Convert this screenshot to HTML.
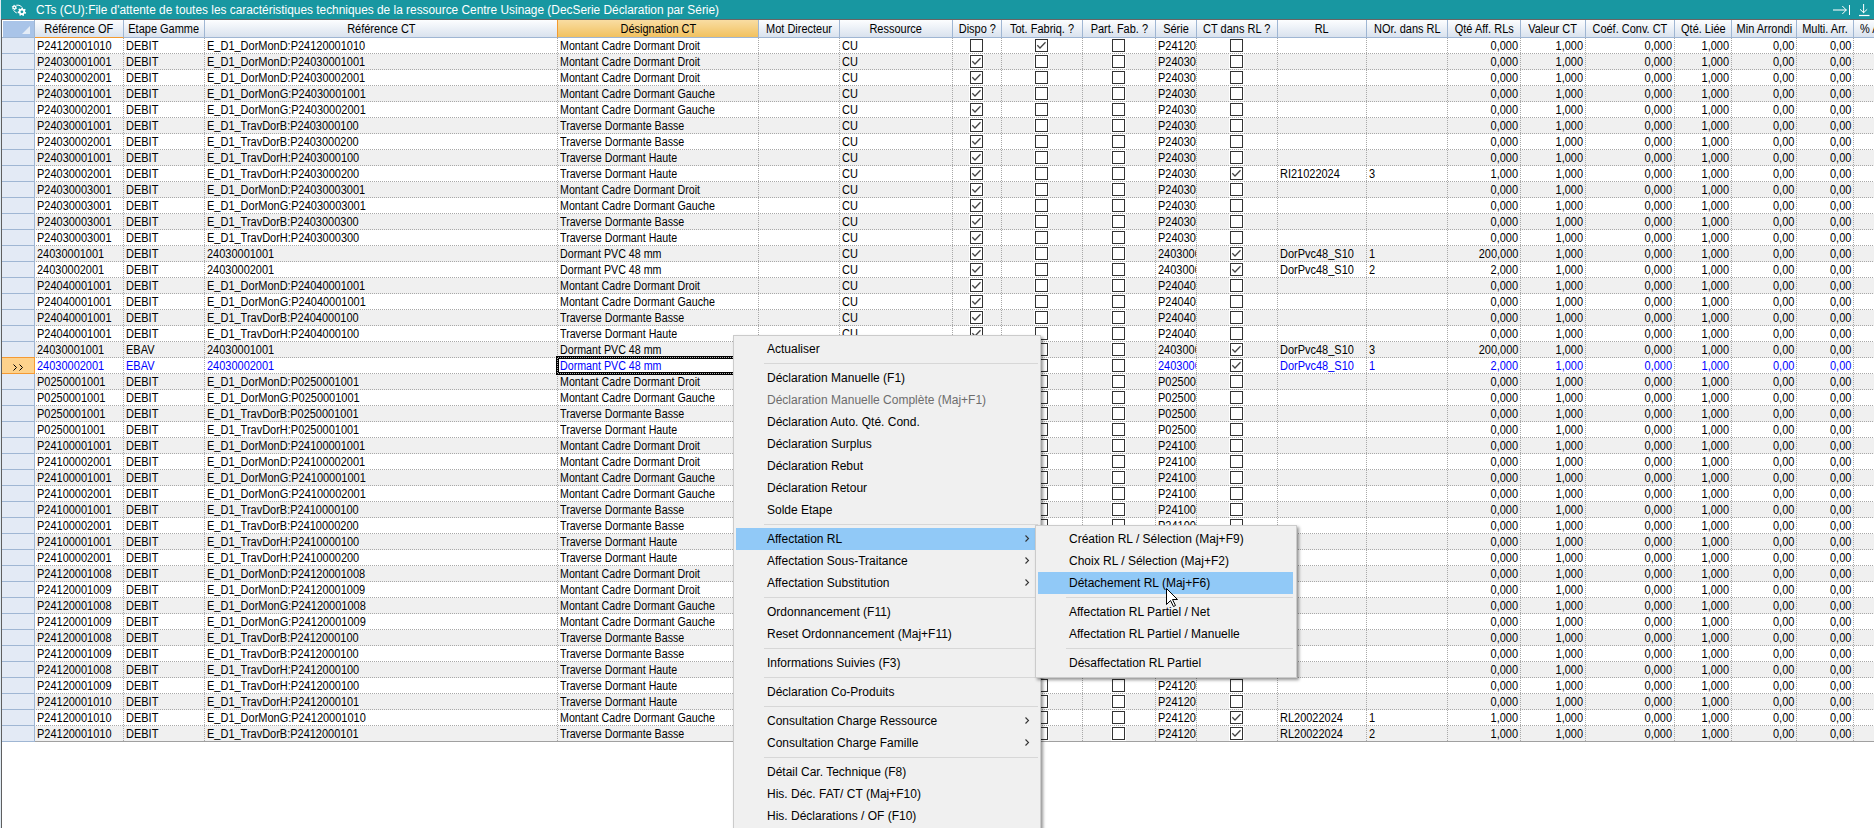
<!DOCTYPE html>
<html><head><meta charset="utf-8"><title>CTs</title>
<style>
*{box-sizing:border-box;margin:0;padding:0}
html,body{width:1874px;height:828px;overflow:hidden;background:#fff}
body{position:relative;font-family:"Liberation Sans",sans-serif;font-size:11px;color:#000}
.a{position:absolute}
#tb{left:1px;top:0;width:1873px;height:19px;background:#1897a1}
#tbl{left:1px;top:19px;width:1873px;height:1px;background:#6b6464}
#ttl{left:36px;top:1px;height:18px;line-height:18px;font-size:12px;color:#fff;white-space:nowrap;transform:scaleX(.99);transform-origin:0 50%}
#lb0{left:0;top:0;width:1px;height:828px;background:#dfeaf3}
#lb1{left:1px;top:19px;width:1px;height:809px;background:#5f5f5f}
.h{top:20px;height:18px;background:linear-gradient(#fdfeff,#d9e2ee);border-right:1px solid #9fb6d3;border-bottom:1px solid #9fb6d3;display:flex;justify-content:center;line-height:19px;white-space:nowrap;overflow:hidden;font-size:12px}
.h b{font-weight:normal;display:inline-block;transform:scaleX(.915);transform-origin:50% 50%}
.hs{background:linear-gradient(#f9dda3,#f1c15f);border-left:1px solid #f39a2f}
.ho{border-bottom-color:#f39a2f}
.r{left:35px;width:1839px;height:16px;overflow:hidden}
.r.g{background:#f0f0f0}
.dl{position:absolute;left:0;bottom:0;width:100%;height:1px;background:repeating-linear-gradient(to right,transparent 0 1px,#a8a8a8 1px 2px)}
.c{position:absolute;top:1px;height:14px;line-height:15px;white-space:nowrap;overflow:hidden;padding-left:2px;font-size:12px}
.c b{font-weight:normal;display:inline-block;transform:scaleX(.915);transform-origin:0 50%}
.c.n{text-align:right;padding-left:0;padding-right:2px}
.c.n b{transform-origin:100% 50%}
.c u{text-decoration:none;position:relative;top:-1px}
.vl{position:absolute;top:38px;width:1px;height:703px;background:repeating-linear-gradient(to bottom,#a8a8a8 0 1px,transparent 1px 2px)}
.s{left:2px;width:33px;height:16px;background:#e3eaf5;border-right:1px solid #9fb6d3;border-bottom:1px solid #9fb6d3}
.sel{color:#0000ff}
.cb{position:absolute;top:0;width:15px;height:15px;background:#fff;padding:1px}
.cb i{display:block;width:13px;height:13px;border:1px solid #333;position:relative}
.cb svg{position:absolute;left:0;top:0}
.mn{background:#f0f0f0;border:1px solid #cbcbcb;font-size:12px;color:#000}
.mi{position:absolute;height:22px;line-height:22px;white-space:nowrap}
.mh{background:#91c9f7}
.ms{position:absolute;height:1px;background:#d7d7d7}
.dis{color:#6d6d6d}
</style></head><body>

<div class="a" id="lb0"></div><div class="a" id="tb"></div><div class="a" id="tbl"></div><div class="a" id="lb1"></div>
<div class="a" id="ttl">CTs (CU):File d'attente de toutes les caractéristiques techniques de la ressource Centre Usinage (DecSerie Déclaration par Série)</div>
<svg class="a" style="left:8px;top:0" width="24" height="19" viewBox="0 0 24 19">
<path fill="#fff" fill-rule="evenodd" d="M8.30 7.50 L9.07 7.92 L8.74 8.85 L7.88 8.70 L7.35 9.15 L7.37 10.02 L6.40 10.20 L6.10 9.38 L5.45 9.15 L4.70 9.60 L4.06 8.85 L4.63 8.18 L4.50 7.50 L3.73 7.08 L4.06 6.15 L4.92 6.30 L5.45 5.85 L5.43 4.98 L6.40 4.80 L6.70 5.62 L7.35 5.85 L8.10 5.40 L8.74 6.15 L8.17 6.82Z M7.2 7.5 A0.8 0.8 0 1 0 5.6 7.5 A0.8 0.8 0 1 0 7.2 7.5Z"/>
<path fill="#fff" fill-rule="evenodd" d="M17.10 11.80 L18.16 12.38 L17.77 13.67 L16.57 13.56 L15.90 14.30 L16.11 15.49 L14.86 15.99 L14.19 14.99 L13.19 14.92 L12.39 15.83 L11.22 15.16 L11.59 14.01 L11.02 13.19 L9.81 13.13 L9.60 11.80 L10.73 11.37 L11.02 10.41 L10.31 9.43 L11.22 8.44 L12.26 9.05 L13.19 8.68 L13.51 7.52 L14.86 7.61 L15.02 8.80 L15.90 9.30 L17.01 8.83 L17.77 9.93 L16.94 10.81Z M15.3 11.8 A1.4 1.4 0 1 0 12.5 11.8 A1.4 1.4 0 1 0 15.3 11.8Z"/>
<path d="M8.3 5.2 Q11 4.6 13.6 6.6" stroke="#fff" stroke-width="1" fill="none"/>
<path d="M5.6 10.3 Q6.6 12 8.8 13" stroke="#fff" stroke-width="1" fill="none"/>
</svg>
<svg class="a" style="left:1830px;top:0" width="44" height="19" viewBox="0 0 44 19">
<g stroke="#fff" stroke-width="1" fill="none">
<path d="M3 10h13.5" stroke="#c4e3e6" stroke-width="1.4"/><path d="M12.3 6l4 4-4 4"/><path d="M19.5 5v10"/>
<path d="M33.6 4v9"/><path d="M30 9.3l3.6 3.4 3.6-3.4"/><path d="M29 15.5h10.5" stroke-width="1.2"/>
</g></svg>
<div class="a" style="left:2px;top:20px;width:33px;height:18px;background:#a9c4e8;border-right:1px solid #9fb6d3;border-bottom:1px solid #9fb6d3;box-shadow:inset 1px 1px 0 #fff"></div>
<svg class="a" style="left:22px;top:26px" width="8" height="8"><path d="M0 8H8V0Z" fill="#e4ecf6"/></svg>
<div class="a h ho" style="left:35px;width:89px"><b>Référence OF</b></div>
<div class="a h" style="left:124px;width:81px"><b>Etape Gamme</b></div>
<div class="a h" style="left:205px;width:353px"><b>Référence CT</b></div>
<div class="a h hs" style="left:557px;width:202px"><b>Désignation CT</b></div>
<div class="a h" style="left:759px;width:81px"><b>Mot Directeur</b></div>
<div class="a h" style="left:840px;width:113px"><b>Ressource</b></div>
<div class="a h" style="left:953px;width:49px"><b>Dispo ?</b></div>
<div class="a h" style="left:1002px;width:81px"><b>Tot. Fabriq. ?</b></div>
<div class="a h" style="left:1083px;width:73px"><b>Part. Fab. ?</b></div>
<div class="a h" style="left:1156px;width:41px"><b>Série</b></div>
<div class="a h" style="left:1197px;width:81px"><b>CT dans RL ?</b></div>
<div class="a h" style="left:1278px;width:89px"><b>RL</b></div>
<div class="a h" style="left:1367px;width:81px"><b>NOr. dans RL</b></div>
<div class="a h" style="left:1448px;width:73px"><b>Qté Aff. RLs</b></div>
<div class="a h" style="left:1521px;width:65px"><b>Valeur CT</b></div>
<div class="a h" style="left:1586px;width:89px"><b>Coéf. Conv. CT</b></div>
<div class="a h" style="left:1675px;width:57px"><b>Qté. Liée</b></div>
<div class="a h" style="left:1732px;width:65px"><b>Min Arrondi</b></div>
<div class="a h" style="left:1797px;width:57px"><b>Multi. Arr.</b></div>
<div class="a h" style="left:1854px;width:100px"><b style="position:absolute;left:6px;transform-origin:0 50%">% Arrondi</b></div>
<div class="a s" style="top:38px"></div>
<div class="a r" style="top:38px">
<span class="c" style="left:0px;width:88px"><b>P24120001010</b></span>
<span class="c" style="left:89px;width:80px"><b>DEBIT</b></span>
<span class="c" style="left:170px;width:352px"><b>E<u>_</u>D1<u>_</u>DorMonD:P24120001010</b></span>
<span class="c" style="left:523px;width:200px"><b style="transform:scaleX(.89)">Montant Cadre Dormant Droit</b></span>
<span class="c" style="left:805px;width:112px"><b>CU</b></span>
<span class="cb" style="left:934px"><i></i></span>
<span class="cb" style="left:999px"><i><svg width="13" height="13"><path d="M1.3 5.3l2.7 2.7 5.5-5.7" stroke="#444" stroke-width="1.3" fill="none"/></svg></i></span>
<span class="cb" style="left:1076px"><i></i></span>
<span class="c" style="left:1121px;width:40px"><b>P24120001010</b></span>
<span class="cb" style="left:1194px"><i></i></span>
<span class="c n" style="left:1413px;width:72px"><b>0,000</b></span>
<span class="c n" style="left:1486px;width:64px"><b>1,000</b></span>
<span class="c n" style="left:1551px;width:88px"><b>0,000</b></span>
<span class="c n" style="left:1640px;width:56px"><b>1,000</b></span>
<span class="c n" style="left:1697px;width:64px"><b>0,00</b></span>
<span class="c n" style="left:1762px;width:56px"><b>0,00</b></span>
<i class="dl"></i>
</div>
<div class="a s" style="top:54px"></div>
<div class="a r g" style="top:54px">
<span class="c" style="left:0px;width:88px"><b>P24030001001</b></span>
<span class="c" style="left:89px;width:80px"><b>DEBIT</b></span>
<span class="c" style="left:170px;width:352px"><b>E<u>_</u>D1<u>_</u>DorMonD:P24030001001</b></span>
<span class="c" style="left:523px;width:200px"><b style="transform:scaleX(.89)">Montant Cadre Dormant Droit</b></span>
<span class="c" style="left:805px;width:112px"><b>CU</b></span>
<span class="cb" style="left:934px"><i><svg width="13" height="13"><path d="M1.3 5.3l2.7 2.7 5.5-5.7" stroke="#444" stroke-width="1.3" fill="none"/></svg></i></span>
<span class="cb" style="left:999px"><i></i></span>
<span class="cb" style="left:1076px"><i></i></span>
<span class="c" style="left:1121px;width:40px"><b>P24030001001</b></span>
<span class="cb" style="left:1194px"><i></i></span>
<span class="c n" style="left:1413px;width:72px"><b>0,000</b></span>
<span class="c n" style="left:1486px;width:64px"><b>1,000</b></span>
<span class="c n" style="left:1551px;width:88px"><b>0,000</b></span>
<span class="c n" style="left:1640px;width:56px"><b>1,000</b></span>
<span class="c n" style="left:1697px;width:64px"><b>0,00</b></span>
<span class="c n" style="left:1762px;width:56px"><b>0,00</b></span>
<i class="dl"></i>
</div>
<div class="a s" style="top:70px"></div>
<div class="a r" style="top:70px">
<span class="c" style="left:0px;width:88px"><b>P24030002001</b></span>
<span class="c" style="left:89px;width:80px"><b>DEBIT</b></span>
<span class="c" style="left:170px;width:352px"><b>E<u>_</u>D1<u>_</u>DorMonD:P24030002001</b></span>
<span class="c" style="left:523px;width:200px"><b style="transform:scaleX(.89)">Montant Cadre Dormant Droit</b></span>
<span class="c" style="left:805px;width:112px"><b>CU</b></span>
<span class="cb" style="left:934px"><i><svg width="13" height="13"><path d="M1.3 5.3l2.7 2.7 5.5-5.7" stroke="#444" stroke-width="1.3" fill="none"/></svg></i></span>
<span class="cb" style="left:999px"><i></i></span>
<span class="cb" style="left:1076px"><i></i></span>
<span class="c" style="left:1121px;width:40px"><b>P24030002001</b></span>
<span class="cb" style="left:1194px"><i></i></span>
<span class="c n" style="left:1413px;width:72px"><b>0,000</b></span>
<span class="c n" style="left:1486px;width:64px"><b>1,000</b></span>
<span class="c n" style="left:1551px;width:88px"><b>0,000</b></span>
<span class="c n" style="left:1640px;width:56px"><b>1,000</b></span>
<span class="c n" style="left:1697px;width:64px"><b>0,00</b></span>
<span class="c n" style="left:1762px;width:56px"><b>0,00</b></span>
<i class="dl"></i>
</div>
<div class="a s" style="top:86px"></div>
<div class="a r g" style="top:86px">
<span class="c" style="left:0px;width:88px"><b>P24030001001</b></span>
<span class="c" style="left:89px;width:80px"><b>DEBIT</b></span>
<span class="c" style="left:170px;width:352px"><b>E<u>_</u>D1<u>_</u>DorMonG:P24030001001</b></span>
<span class="c" style="left:523px;width:200px"><b style="transform:scaleX(.89)">Montant Cadre Dormant Gauche</b></span>
<span class="c" style="left:805px;width:112px"><b>CU</b></span>
<span class="cb" style="left:934px"><i><svg width="13" height="13"><path d="M1.3 5.3l2.7 2.7 5.5-5.7" stroke="#444" stroke-width="1.3" fill="none"/></svg></i></span>
<span class="cb" style="left:999px"><i></i></span>
<span class="cb" style="left:1076px"><i></i></span>
<span class="c" style="left:1121px;width:40px"><b>P24030001001</b></span>
<span class="cb" style="left:1194px"><i></i></span>
<span class="c n" style="left:1413px;width:72px"><b>0,000</b></span>
<span class="c n" style="left:1486px;width:64px"><b>1,000</b></span>
<span class="c n" style="left:1551px;width:88px"><b>0,000</b></span>
<span class="c n" style="left:1640px;width:56px"><b>1,000</b></span>
<span class="c n" style="left:1697px;width:64px"><b>0,00</b></span>
<span class="c n" style="left:1762px;width:56px"><b>0,00</b></span>
<i class="dl"></i>
</div>
<div class="a s" style="top:102px"></div>
<div class="a r" style="top:102px">
<span class="c" style="left:0px;width:88px"><b>P24030002001</b></span>
<span class="c" style="left:89px;width:80px"><b>DEBIT</b></span>
<span class="c" style="left:170px;width:352px"><b>E<u>_</u>D1<u>_</u>DorMonG:P24030002001</b></span>
<span class="c" style="left:523px;width:200px"><b style="transform:scaleX(.89)">Montant Cadre Dormant Gauche</b></span>
<span class="c" style="left:805px;width:112px"><b>CU</b></span>
<span class="cb" style="left:934px"><i><svg width="13" height="13"><path d="M1.3 5.3l2.7 2.7 5.5-5.7" stroke="#444" stroke-width="1.3" fill="none"/></svg></i></span>
<span class="cb" style="left:999px"><i></i></span>
<span class="cb" style="left:1076px"><i></i></span>
<span class="c" style="left:1121px;width:40px"><b>P24030002001</b></span>
<span class="cb" style="left:1194px"><i></i></span>
<span class="c n" style="left:1413px;width:72px"><b>0,000</b></span>
<span class="c n" style="left:1486px;width:64px"><b>1,000</b></span>
<span class="c n" style="left:1551px;width:88px"><b>0,000</b></span>
<span class="c n" style="left:1640px;width:56px"><b>1,000</b></span>
<span class="c n" style="left:1697px;width:64px"><b>0,00</b></span>
<span class="c n" style="left:1762px;width:56px"><b>0,00</b></span>
<i class="dl"></i>
</div>
<div class="a s" style="top:118px"></div>
<div class="a r g" style="top:118px">
<span class="c" style="left:0px;width:88px"><b>P24030001001</b></span>
<span class="c" style="left:89px;width:80px"><b>DEBIT</b></span>
<span class="c" style="left:170px;width:352px"><b>E<u>_</u>D1<u>_</u>TravDorB:P2403000100</b></span>
<span class="c" style="left:523px;width:200px"><b style="transform:scaleX(.89)">Traverse Dormante Basse</b></span>
<span class="c" style="left:805px;width:112px"><b>CU</b></span>
<span class="cb" style="left:934px"><i><svg width="13" height="13"><path d="M1.3 5.3l2.7 2.7 5.5-5.7" stroke="#444" stroke-width="1.3" fill="none"/></svg></i></span>
<span class="cb" style="left:999px"><i></i></span>
<span class="cb" style="left:1076px"><i></i></span>
<span class="c" style="left:1121px;width:40px"><b>P24030001001</b></span>
<span class="cb" style="left:1194px"><i></i></span>
<span class="c n" style="left:1413px;width:72px"><b>0,000</b></span>
<span class="c n" style="left:1486px;width:64px"><b>1,000</b></span>
<span class="c n" style="left:1551px;width:88px"><b>0,000</b></span>
<span class="c n" style="left:1640px;width:56px"><b>1,000</b></span>
<span class="c n" style="left:1697px;width:64px"><b>0,00</b></span>
<span class="c n" style="left:1762px;width:56px"><b>0,00</b></span>
<i class="dl"></i>
</div>
<div class="a s" style="top:134px"></div>
<div class="a r" style="top:134px">
<span class="c" style="left:0px;width:88px"><b>P24030002001</b></span>
<span class="c" style="left:89px;width:80px"><b>DEBIT</b></span>
<span class="c" style="left:170px;width:352px"><b>E<u>_</u>D1<u>_</u>TravDorB:P2403000200</b></span>
<span class="c" style="left:523px;width:200px"><b style="transform:scaleX(.89)">Traverse Dormante Basse</b></span>
<span class="c" style="left:805px;width:112px"><b>CU</b></span>
<span class="cb" style="left:934px"><i><svg width="13" height="13"><path d="M1.3 5.3l2.7 2.7 5.5-5.7" stroke="#444" stroke-width="1.3" fill="none"/></svg></i></span>
<span class="cb" style="left:999px"><i></i></span>
<span class="cb" style="left:1076px"><i></i></span>
<span class="c" style="left:1121px;width:40px"><b>P24030002001</b></span>
<span class="cb" style="left:1194px"><i></i></span>
<span class="c n" style="left:1413px;width:72px"><b>0,000</b></span>
<span class="c n" style="left:1486px;width:64px"><b>1,000</b></span>
<span class="c n" style="left:1551px;width:88px"><b>0,000</b></span>
<span class="c n" style="left:1640px;width:56px"><b>1,000</b></span>
<span class="c n" style="left:1697px;width:64px"><b>0,00</b></span>
<span class="c n" style="left:1762px;width:56px"><b>0,00</b></span>
<i class="dl"></i>
</div>
<div class="a s" style="top:150px"></div>
<div class="a r g" style="top:150px">
<span class="c" style="left:0px;width:88px"><b>P24030001001</b></span>
<span class="c" style="left:89px;width:80px"><b>DEBIT</b></span>
<span class="c" style="left:170px;width:352px"><b>E<u>_</u>D1<u>_</u>TravDorH:P2403000100</b></span>
<span class="c" style="left:523px;width:200px"><b style="transform:scaleX(.89)">Traverse Dormant Haute</b></span>
<span class="c" style="left:805px;width:112px"><b>CU</b></span>
<span class="cb" style="left:934px"><i><svg width="13" height="13"><path d="M1.3 5.3l2.7 2.7 5.5-5.7" stroke="#444" stroke-width="1.3" fill="none"/></svg></i></span>
<span class="cb" style="left:999px"><i></i></span>
<span class="cb" style="left:1076px"><i></i></span>
<span class="c" style="left:1121px;width:40px"><b>P24030001001</b></span>
<span class="cb" style="left:1194px"><i></i></span>
<span class="c n" style="left:1413px;width:72px"><b>0,000</b></span>
<span class="c n" style="left:1486px;width:64px"><b>1,000</b></span>
<span class="c n" style="left:1551px;width:88px"><b>0,000</b></span>
<span class="c n" style="left:1640px;width:56px"><b>1,000</b></span>
<span class="c n" style="left:1697px;width:64px"><b>0,00</b></span>
<span class="c n" style="left:1762px;width:56px"><b>0,00</b></span>
<i class="dl"></i>
</div>
<div class="a s" style="top:166px"></div>
<div class="a r" style="top:166px">
<span class="c" style="left:0px;width:88px"><b>P24030002001</b></span>
<span class="c" style="left:89px;width:80px"><b>DEBIT</b></span>
<span class="c" style="left:170px;width:352px"><b>E<u>_</u>D1<u>_</u>TravDorH:P2403000200</b></span>
<span class="c" style="left:523px;width:200px"><b style="transform:scaleX(.89)">Traverse Dormant Haute</b></span>
<span class="c" style="left:805px;width:112px"><b>CU</b></span>
<span class="cb" style="left:934px"><i><svg width="13" height="13"><path d="M1.3 5.3l2.7 2.7 5.5-5.7" stroke="#444" stroke-width="1.3" fill="none"/></svg></i></span>
<span class="cb" style="left:999px"><i></i></span>
<span class="cb" style="left:1076px"><i></i></span>
<span class="c" style="left:1121px;width:40px"><b>P24030002001</b></span>
<span class="cb" style="left:1194px"><i><svg width="13" height="13"><path d="M1.3 5.3l2.7 2.7 5.5-5.7" stroke="#444" stroke-width="1.3" fill="none"/></svg></i></span>
<span class="c" style="left:1243px;width:88px"><b>RI21022024</b></span>
<span class="c" style="left:1332px;width:80px"><b>3</b></span>
<span class="c n" style="left:1413px;width:72px"><b>1,000</b></span>
<span class="c n" style="left:1486px;width:64px"><b>1,000</b></span>
<span class="c n" style="left:1551px;width:88px"><b>0,000</b></span>
<span class="c n" style="left:1640px;width:56px"><b>1,000</b></span>
<span class="c n" style="left:1697px;width:64px"><b>0,00</b></span>
<span class="c n" style="left:1762px;width:56px"><b>0,00</b></span>
<i class="dl"></i>
</div>
<div class="a s" style="top:182px"></div>
<div class="a r g" style="top:182px">
<span class="c" style="left:0px;width:88px"><b>P24030003001</b></span>
<span class="c" style="left:89px;width:80px"><b>DEBIT</b></span>
<span class="c" style="left:170px;width:352px"><b>E<u>_</u>D1<u>_</u>DorMonD:P24030003001</b></span>
<span class="c" style="left:523px;width:200px"><b style="transform:scaleX(.89)">Montant Cadre Dormant Droit</b></span>
<span class="c" style="left:805px;width:112px"><b>CU</b></span>
<span class="cb" style="left:934px"><i><svg width="13" height="13"><path d="M1.3 5.3l2.7 2.7 5.5-5.7" stroke="#444" stroke-width="1.3" fill="none"/></svg></i></span>
<span class="cb" style="left:999px"><i></i></span>
<span class="cb" style="left:1076px"><i></i></span>
<span class="c" style="left:1121px;width:40px"><b>P24030003001</b></span>
<span class="cb" style="left:1194px"><i></i></span>
<span class="c n" style="left:1413px;width:72px"><b>0,000</b></span>
<span class="c n" style="left:1486px;width:64px"><b>1,000</b></span>
<span class="c n" style="left:1551px;width:88px"><b>0,000</b></span>
<span class="c n" style="left:1640px;width:56px"><b>1,000</b></span>
<span class="c n" style="left:1697px;width:64px"><b>0,00</b></span>
<span class="c n" style="left:1762px;width:56px"><b>0,00</b></span>
<i class="dl"></i>
</div>
<div class="a s" style="top:198px"></div>
<div class="a r" style="top:198px">
<span class="c" style="left:0px;width:88px"><b>P24030003001</b></span>
<span class="c" style="left:89px;width:80px"><b>DEBIT</b></span>
<span class="c" style="left:170px;width:352px"><b>E<u>_</u>D1<u>_</u>DorMonG:P24030003001</b></span>
<span class="c" style="left:523px;width:200px"><b style="transform:scaleX(.89)">Montant Cadre Dormant Gauche</b></span>
<span class="c" style="left:805px;width:112px"><b>CU</b></span>
<span class="cb" style="left:934px"><i><svg width="13" height="13"><path d="M1.3 5.3l2.7 2.7 5.5-5.7" stroke="#444" stroke-width="1.3" fill="none"/></svg></i></span>
<span class="cb" style="left:999px"><i></i></span>
<span class="cb" style="left:1076px"><i></i></span>
<span class="c" style="left:1121px;width:40px"><b>P24030003001</b></span>
<span class="cb" style="left:1194px"><i></i></span>
<span class="c n" style="left:1413px;width:72px"><b>0,000</b></span>
<span class="c n" style="left:1486px;width:64px"><b>1,000</b></span>
<span class="c n" style="left:1551px;width:88px"><b>0,000</b></span>
<span class="c n" style="left:1640px;width:56px"><b>1,000</b></span>
<span class="c n" style="left:1697px;width:64px"><b>0,00</b></span>
<span class="c n" style="left:1762px;width:56px"><b>0,00</b></span>
<i class="dl"></i>
</div>
<div class="a s" style="top:214px"></div>
<div class="a r g" style="top:214px">
<span class="c" style="left:0px;width:88px"><b>P24030003001</b></span>
<span class="c" style="left:89px;width:80px"><b>DEBIT</b></span>
<span class="c" style="left:170px;width:352px"><b>E<u>_</u>D1<u>_</u>TravDorB:P2403000300</b></span>
<span class="c" style="left:523px;width:200px"><b style="transform:scaleX(.89)">Traverse Dormante Basse</b></span>
<span class="c" style="left:805px;width:112px"><b>CU</b></span>
<span class="cb" style="left:934px"><i><svg width="13" height="13"><path d="M1.3 5.3l2.7 2.7 5.5-5.7" stroke="#444" stroke-width="1.3" fill="none"/></svg></i></span>
<span class="cb" style="left:999px"><i></i></span>
<span class="cb" style="left:1076px"><i></i></span>
<span class="c" style="left:1121px;width:40px"><b>P24030003001</b></span>
<span class="cb" style="left:1194px"><i></i></span>
<span class="c n" style="left:1413px;width:72px"><b>0,000</b></span>
<span class="c n" style="left:1486px;width:64px"><b>1,000</b></span>
<span class="c n" style="left:1551px;width:88px"><b>0,000</b></span>
<span class="c n" style="left:1640px;width:56px"><b>1,000</b></span>
<span class="c n" style="left:1697px;width:64px"><b>0,00</b></span>
<span class="c n" style="left:1762px;width:56px"><b>0,00</b></span>
<i class="dl"></i>
</div>
<div class="a s" style="top:230px"></div>
<div class="a r" style="top:230px">
<span class="c" style="left:0px;width:88px"><b>P24030003001</b></span>
<span class="c" style="left:89px;width:80px"><b>DEBIT</b></span>
<span class="c" style="left:170px;width:352px"><b>E<u>_</u>D1<u>_</u>TravDorH:P2403000300</b></span>
<span class="c" style="left:523px;width:200px"><b style="transform:scaleX(.89)">Traverse Dormant Haute</b></span>
<span class="c" style="left:805px;width:112px"><b>CU</b></span>
<span class="cb" style="left:934px"><i><svg width="13" height="13"><path d="M1.3 5.3l2.7 2.7 5.5-5.7" stroke="#444" stroke-width="1.3" fill="none"/></svg></i></span>
<span class="cb" style="left:999px"><i></i></span>
<span class="cb" style="left:1076px"><i></i></span>
<span class="c" style="left:1121px;width:40px"><b>P24030003001</b></span>
<span class="cb" style="left:1194px"><i></i></span>
<span class="c n" style="left:1413px;width:72px"><b>0,000</b></span>
<span class="c n" style="left:1486px;width:64px"><b>1,000</b></span>
<span class="c n" style="left:1551px;width:88px"><b>0,000</b></span>
<span class="c n" style="left:1640px;width:56px"><b>1,000</b></span>
<span class="c n" style="left:1697px;width:64px"><b>0,00</b></span>
<span class="c n" style="left:1762px;width:56px"><b>0,00</b></span>
<i class="dl"></i>
</div>
<div class="a s" style="top:246px"></div>
<div class="a r g" style="top:246px">
<span class="c" style="left:0px;width:88px"><b>24030001001</b></span>
<span class="c" style="left:89px;width:80px"><b>DEBIT</b></span>
<span class="c" style="left:170px;width:352px"><b>24030001001</b></span>
<span class="c" style="left:523px;width:200px"><b style="transform:scaleX(.89)">Dormant PVC 48 mm</b></span>
<span class="c" style="left:805px;width:112px"><b>CU</b></span>
<span class="cb" style="left:934px"><i><svg width="13" height="13"><path d="M1.3 5.3l2.7 2.7 5.5-5.7" stroke="#444" stroke-width="1.3" fill="none"/></svg></i></span>
<span class="cb" style="left:999px"><i></i></span>
<span class="cb" style="left:1076px"><i></i></span>
<span class="c" style="left:1121px;width:40px"><b>24030001001</b></span>
<span class="cb" style="left:1194px"><i><svg width="13" height="13"><path d="M1.3 5.3l2.7 2.7 5.5-5.7" stroke="#444" stroke-width="1.3" fill="none"/></svg></i></span>
<span class="c" style="left:1243px;width:88px"><b>DorPvc48<u>_</u>S10</b></span>
<span class="c" style="left:1332px;width:80px"><b>1</b></span>
<span class="c n" style="left:1413px;width:72px"><b>200,000</b></span>
<span class="c n" style="left:1486px;width:64px"><b>1,000</b></span>
<span class="c n" style="left:1551px;width:88px"><b>0,000</b></span>
<span class="c n" style="left:1640px;width:56px"><b>1,000</b></span>
<span class="c n" style="left:1697px;width:64px"><b>0,00</b></span>
<span class="c n" style="left:1762px;width:56px"><b>0,00</b></span>
<i class="dl"></i>
</div>
<div class="a s" style="top:262px"></div>
<div class="a r" style="top:262px">
<span class="c" style="left:0px;width:88px"><b>24030002001</b></span>
<span class="c" style="left:89px;width:80px"><b>DEBIT</b></span>
<span class="c" style="left:170px;width:352px"><b>24030002001</b></span>
<span class="c" style="left:523px;width:200px"><b style="transform:scaleX(.89)">Dormant PVC 48 mm</b></span>
<span class="c" style="left:805px;width:112px"><b>CU</b></span>
<span class="cb" style="left:934px"><i><svg width="13" height="13"><path d="M1.3 5.3l2.7 2.7 5.5-5.7" stroke="#444" stroke-width="1.3" fill="none"/></svg></i></span>
<span class="cb" style="left:999px"><i></i></span>
<span class="cb" style="left:1076px"><i></i></span>
<span class="c" style="left:1121px;width:40px"><b>24030002001</b></span>
<span class="cb" style="left:1194px"><i><svg width="13" height="13"><path d="M1.3 5.3l2.7 2.7 5.5-5.7" stroke="#444" stroke-width="1.3" fill="none"/></svg></i></span>
<span class="c" style="left:1243px;width:88px"><b>DorPvc48<u>_</u>S10</b></span>
<span class="c" style="left:1332px;width:80px"><b>2</b></span>
<span class="c n" style="left:1413px;width:72px"><b>2,000</b></span>
<span class="c n" style="left:1486px;width:64px"><b>1,000</b></span>
<span class="c n" style="left:1551px;width:88px"><b>0,000</b></span>
<span class="c n" style="left:1640px;width:56px"><b>1,000</b></span>
<span class="c n" style="left:1697px;width:64px"><b>0,00</b></span>
<span class="c n" style="left:1762px;width:56px"><b>0,00</b></span>
<i class="dl"></i>
</div>
<div class="a s" style="top:278px"></div>
<div class="a r g" style="top:278px">
<span class="c" style="left:0px;width:88px"><b>P24040001001</b></span>
<span class="c" style="left:89px;width:80px"><b>DEBIT</b></span>
<span class="c" style="left:170px;width:352px"><b>E<u>_</u>D1<u>_</u>DorMonD:P24040001001</b></span>
<span class="c" style="left:523px;width:200px"><b style="transform:scaleX(.89)">Montant Cadre Dormant Droit</b></span>
<span class="c" style="left:805px;width:112px"><b>CU</b></span>
<span class="cb" style="left:934px"><i><svg width="13" height="13"><path d="M1.3 5.3l2.7 2.7 5.5-5.7" stroke="#444" stroke-width="1.3" fill="none"/></svg></i></span>
<span class="cb" style="left:999px"><i></i></span>
<span class="cb" style="left:1076px"><i></i></span>
<span class="c" style="left:1121px;width:40px"><b>P24040001001</b></span>
<span class="cb" style="left:1194px"><i></i></span>
<span class="c n" style="left:1413px;width:72px"><b>0,000</b></span>
<span class="c n" style="left:1486px;width:64px"><b>1,000</b></span>
<span class="c n" style="left:1551px;width:88px"><b>0,000</b></span>
<span class="c n" style="left:1640px;width:56px"><b>1,000</b></span>
<span class="c n" style="left:1697px;width:64px"><b>0,00</b></span>
<span class="c n" style="left:1762px;width:56px"><b>0,00</b></span>
<i class="dl"></i>
</div>
<div class="a s" style="top:294px"></div>
<div class="a r" style="top:294px">
<span class="c" style="left:0px;width:88px"><b>P24040001001</b></span>
<span class="c" style="left:89px;width:80px"><b>DEBIT</b></span>
<span class="c" style="left:170px;width:352px"><b>E<u>_</u>D1<u>_</u>DorMonG:P24040001001</b></span>
<span class="c" style="left:523px;width:200px"><b style="transform:scaleX(.89)">Montant Cadre Dormant Gauche</b></span>
<span class="c" style="left:805px;width:112px"><b>CU</b></span>
<span class="cb" style="left:934px"><i><svg width="13" height="13"><path d="M1.3 5.3l2.7 2.7 5.5-5.7" stroke="#444" stroke-width="1.3" fill="none"/></svg></i></span>
<span class="cb" style="left:999px"><i></i></span>
<span class="cb" style="left:1076px"><i></i></span>
<span class="c" style="left:1121px;width:40px"><b>P24040001001</b></span>
<span class="cb" style="left:1194px"><i></i></span>
<span class="c n" style="left:1413px;width:72px"><b>0,000</b></span>
<span class="c n" style="left:1486px;width:64px"><b>1,000</b></span>
<span class="c n" style="left:1551px;width:88px"><b>0,000</b></span>
<span class="c n" style="left:1640px;width:56px"><b>1,000</b></span>
<span class="c n" style="left:1697px;width:64px"><b>0,00</b></span>
<span class="c n" style="left:1762px;width:56px"><b>0,00</b></span>
<i class="dl"></i>
</div>
<div class="a s" style="top:310px"></div>
<div class="a r g" style="top:310px">
<span class="c" style="left:0px;width:88px"><b>P24040001001</b></span>
<span class="c" style="left:89px;width:80px"><b>DEBIT</b></span>
<span class="c" style="left:170px;width:352px"><b>E<u>_</u>D1<u>_</u>TravDorB:P2404000100</b></span>
<span class="c" style="left:523px;width:200px"><b style="transform:scaleX(.89)">Traverse Dormante Basse</b></span>
<span class="c" style="left:805px;width:112px"><b>CU</b></span>
<span class="cb" style="left:934px"><i><svg width="13" height="13"><path d="M1.3 5.3l2.7 2.7 5.5-5.7" stroke="#444" stroke-width="1.3" fill="none"/></svg></i></span>
<span class="cb" style="left:999px"><i></i></span>
<span class="cb" style="left:1076px"><i></i></span>
<span class="c" style="left:1121px;width:40px"><b>P24040001001</b></span>
<span class="cb" style="left:1194px"><i></i></span>
<span class="c n" style="left:1413px;width:72px"><b>0,000</b></span>
<span class="c n" style="left:1486px;width:64px"><b>1,000</b></span>
<span class="c n" style="left:1551px;width:88px"><b>0,000</b></span>
<span class="c n" style="left:1640px;width:56px"><b>1,000</b></span>
<span class="c n" style="left:1697px;width:64px"><b>0,00</b></span>
<span class="c n" style="left:1762px;width:56px"><b>0,00</b></span>
<i class="dl"></i>
</div>
<div class="a s" style="top:326px"></div>
<div class="a r" style="top:326px">
<span class="c" style="left:0px;width:88px"><b>P24040001001</b></span>
<span class="c" style="left:89px;width:80px"><b>DEBIT</b></span>
<span class="c" style="left:170px;width:352px"><b>E<u>_</u>D1<u>_</u>TravDorH:P2404000100</b></span>
<span class="c" style="left:523px;width:200px"><b style="transform:scaleX(.89)">Traverse Dormant Haute</b></span>
<span class="c" style="left:805px;width:112px"><b>CU</b></span>
<span class="cb" style="left:934px"><i><svg width="13" height="13"><path d="M1.3 5.3l2.7 2.7 5.5-5.7" stroke="#444" stroke-width="1.3" fill="none"/></svg></i></span>
<span class="cb" style="left:999px"><i></i></span>
<span class="cb" style="left:1076px"><i></i></span>
<span class="c" style="left:1121px;width:40px"><b>P24040001001</b></span>
<span class="cb" style="left:1194px"><i></i></span>
<span class="c n" style="left:1413px;width:72px"><b>0,000</b></span>
<span class="c n" style="left:1486px;width:64px"><b>1,000</b></span>
<span class="c n" style="left:1551px;width:88px"><b>0,000</b></span>
<span class="c n" style="left:1640px;width:56px"><b>1,000</b></span>
<span class="c n" style="left:1697px;width:64px"><b>0,00</b></span>
<span class="c n" style="left:1762px;width:56px"><b>0,00</b></span>
<i class="dl"></i>
</div>
<div class="a s" style="top:342px"></div>
<div class="a r g" style="top:342px">
<span class="c" style="left:0px;width:88px"><b>24030001001</b></span>
<span class="c" style="left:89px;width:80px"><b>EBAV</b></span>
<span class="c" style="left:170px;width:352px"><b>24030001001</b></span>
<span class="c" style="left:523px;width:200px"><b style="transform:scaleX(.89)">Dormant PVC 48 mm</b></span>
<span class="c" style="left:805px;width:112px"><b>CU</b></span>
<span class="cb" style="left:934px"><i><svg width="13" height="13"><path d="M1.3 5.3l2.7 2.7 5.5-5.7" stroke="#444" stroke-width="1.3" fill="none"/></svg></i></span>
<span class="cb" style="left:999px"><i></i></span>
<span class="cb" style="left:1076px"><i></i></span>
<span class="c" style="left:1121px;width:40px"><b>24030001001</b></span>
<span class="cb" style="left:1194px"><i><svg width="13" height="13"><path d="M1.3 5.3l2.7 2.7 5.5-5.7" stroke="#444" stroke-width="1.3" fill="none"/></svg></i></span>
<span class="c" style="left:1243px;width:88px"><b>DorPvc48<u>_</u>S10</b></span>
<span class="c" style="left:1332px;width:80px"><b>3</b></span>
<span class="c n" style="left:1413px;width:72px"><b>200,000</b></span>
<span class="c n" style="left:1486px;width:64px"><b>1,000</b></span>
<span class="c n" style="left:1551px;width:88px"><b>0,000</b></span>
<span class="c n" style="left:1640px;width:56px"><b>1,000</b></span>
<span class="c n" style="left:1697px;width:64px"><b>0,00</b></span>
<span class="c n" style="left:1762px;width:56px"><b>0,00</b></span>
<i class="dl"></i>
</div>
<div class="a" style="left:2px;top:357px;width:33px;height:17px;background:#fdd28c;border:1px solid #f59a33;border-left:none"></div>
<svg class="a" style="left:12px;top:364px" width="12" height="8"><path d="M1.5 0.5l3 3-3 3M7.5 0.5l3 3-3 3" stroke="#000" stroke-width="1" fill="none"/></svg>
<div class="a r sel" style="top:358px">
<span class="c" style="left:0px;width:88px"><b>24030002001</b></span>
<span class="c" style="left:89px;width:80px"><b>EBAV</b></span>
<span class="c" style="left:170px;width:352px"><b>24030002001</b></span>
<span class="c" style="left:523px;width:200px"><b style="transform:scaleX(.89)">Dormant PVC 48 mm</b></span>
<span class="c" style="left:805px;width:112px"><b>CU</b></span>
<span class="cb" style="left:934px"><i><svg width="13" height="13"><path d="M1.3 5.3l2.7 2.7 5.5-5.7" stroke="#444" stroke-width="1.3" fill="none"/></svg></i></span>
<span class="cb" style="left:999px"><i></i></span>
<span class="cb" style="left:1076px"><i></i></span>
<span class="c" style="left:1121px;width:40px"><b>24030002001</b></span>
<span class="cb" style="left:1194px"><i><svg width="13" height="13"><path d="M1.3 5.3l2.7 2.7 5.5-5.7" stroke="#444" stroke-width="1.3" fill="none"/></svg></i></span>
<span class="c" style="left:1243px;width:88px"><b>DorPvc48<u>_</u>S10</b></span>
<span class="c" style="left:1332px;width:80px"><b>1</b></span>
<span class="c n" style="left:1413px;width:72px"><b>2,000</b></span>
<span class="c n" style="left:1486px;width:64px"><b>1,000</b></span>
<span class="c n" style="left:1551px;width:88px"><b>0,000</b></span>
<span class="c n" style="left:1640px;width:56px"><b>1,000</b></span>
<span class="c n" style="left:1697px;width:64px"><b>0,00</b></span>
<span class="c n" style="left:1762px;width:56px"><b>0,00</b></span>
<i class="dl"></i>
</div>
<div class="a s" style="top:374px"></div>
<div class="a r g" style="top:374px">
<span class="c" style="left:0px;width:88px"><b>P0250001001</b></span>
<span class="c" style="left:89px;width:80px"><b>DEBIT</b></span>
<span class="c" style="left:170px;width:352px"><b>E<u>_</u>D1<u>_</u>DorMonD:P0250001001</b></span>
<span class="c" style="left:523px;width:200px"><b style="transform:scaleX(.89)">Montant Cadre Dormant Droit</b></span>
<span class="c" style="left:805px;width:112px"><b>CU</b></span>
<span class="cb" style="left:934px"><i><svg width="13" height="13"><path d="M1.3 5.3l2.7 2.7 5.5-5.7" stroke="#444" stroke-width="1.3" fill="none"/></svg></i></span>
<span class="cb" style="left:999px"><i></i></span>
<span class="cb" style="left:1076px"><i></i></span>
<span class="c" style="left:1121px;width:40px"><b>P0250001001</b></span>
<span class="cb" style="left:1194px"><i></i></span>
<span class="c n" style="left:1413px;width:72px"><b>0,000</b></span>
<span class="c n" style="left:1486px;width:64px"><b>1,000</b></span>
<span class="c n" style="left:1551px;width:88px"><b>0,000</b></span>
<span class="c n" style="left:1640px;width:56px"><b>1,000</b></span>
<span class="c n" style="left:1697px;width:64px"><b>0,00</b></span>
<span class="c n" style="left:1762px;width:56px"><b>0,00</b></span>
<i class="dl"></i>
</div>
<div class="a s" style="top:390px"></div>
<div class="a r" style="top:390px">
<span class="c" style="left:0px;width:88px"><b>P0250001001</b></span>
<span class="c" style="left:89px;width:80px"><b>DEBIT</b></span>
<span class="c" style="left:170px;width:352px"><b>E<u>_</u>D1<u>_</u>DorMonG:P0250001001</b></span>
<span class="c" style="left:523px;width:200px"><b style="transform:scaleX(.89)">Montant Cadre Dormant Gauche</b></span>
<span class="c" style="left:805px;width:112px"><b>CU</b></span>
<span class="cb" style="left:934px"><i><svg width="13" height="13"><path d="M1.3 5.3l2.7 2.7 5.5-5.7" stroke="#444" stroke-width="1.3" fill="none"/></svg></i></span>
<span class="cb" style="left:999px"><i></i></span>
<span class="cb" style="left:1076px"><i></i></span>
<span class="c" style="left:1121px;width:40px"><b>P0250001001</b></span>
<span class="cb" style="left:1194px"><i></i></span>
<span class="c n" style="left:1413px;width:72px"><b>0,000</b></span>
<span class="c n" style="left:1486px;width:64px"><b>1,000</b></span>
<span class="c n" style="left:1551px;width:88px"><b>0,000</b></span>
<span class="c n" style="left:1640px;width:56px"><b>1,000</b></span>
<span class="c n" style="left:1697px;width:64px"><b>0,00</b></span>
<span class="c n" style="left:1762px;width:56px"><b>0,00</b></span>
<i class="dl"></i>
</div>
<div class="a s" style="top:406px"></div>
<div class="a r g" style="top:406px">
<span class="c" style="left:0px;width:88px"><b>P0250001001</b></span>
<span class="c" style="left:89px;width:80px"><b>DEBIT</b></span>
<span class="c" style="left:170px;width:352px"><b>E<u>_</u>D1<u>_</u>TravDorB:P0250001001</b></span>
<span class="c" style="left:523px;width:200px"><b style="transform:scaleX(.89)">Traverse Dormante Basse</b></span>
<span class="c" style="left:805px;width:112px"><b>CU</b></span>
<span class="cb" style="left:934px"><i><svg width="13" height="13"><path d="M1.3 5.3l2.7 2.7 5.5-5.7" stroke="#444" stroke-width="1.3" fill="none"/></svg></i></span>
<span class="cb" style="left:999px"><i></i></span>
<span class="cb" style="left:1076px"><i></i></span>
<span class="c" style="left:1121px;width:40px"><b>P0250001001</b></span>
<span class="cb" style="left:1194px"><i></i></span>
<span class="c n" style="left:1413px;width:72px"><b>0,000</b></span>
<span class="c n" style="left:1486px;width:64px"><b>1,000</b></span>
<span class="c n" style="left:1551px;width:88px"><b>0,000</b></span>
<span class="c n" style="left:1640px;width:56px"><b>1,000</b></span>
<span class="c n" style="left:1697px;width:64px"><b>0,00</b></span>
<span class="c n" style="left:1762px;width:56px"><b>0,00</b></span>
<i class="dl"></i>
</div>
<div class="a s" style="top:422px"></div>
<div class="a r" style="top:422px">
<span class="c" style="left:0px;width:88px"><b>P0250001001</b></span>
<span class="c" style="left:89px;width:80px"><b>DEBIT</b></span>
<span class="c" style="left:170px;width:352px"><b>E<u>_</u>D1<u>_</u>TravDorH:P0250001001</b></span>
<span class="c" style="left:523px;width:200px"><b style="transform:scaleX(.89)">Traverse Dormant Haute</b></span>
<span class="c" style="left:805px;width:112px"><b>CU</b></span>
<span class="cb" style="left:934px"><i><svg width="13" height="13"><path d="M1.3 5.3l2.7 2.7 5.5-5.7" stroke="#444" stroke-width="1.3" fill="none"/></svg></i></span>
<span class="cb" style="left:999px"><i></i></span>
<span class="cb" style="left:1076px"><i></i></span>
<span class="c" style="left:1121px;width:40px"><b>P0250001001</b></span>
<span class="cb" style="left:1194px"><i></i></span>
<span class="c n" style="left:1413px;width:72px"><b>0,000</b></span>
<span class="c n" style="left:1486px;width:64px"><b>1,000</b></span>
<span class="c n" style="left:1551px;width:88px"><b>0,000</b></span>
<span class="c n" style="left:1640px;width:56px"><b>1,000</b></span>
<span class="c n" style="left:1697px;width:64px"><b>0,00</b></span>
<span class="c n" style="left:1762px;width:56px"><b>0,00</b></span>
<i class="dl"></i>
</div>
<div class="a s" style="top:438px"></div>
<div class="a r g" style="top:438px">
<span class="c" style="left:0px;width:88px"><b>P24100001001</b></span>
<span class="c" style="left:89px;width:80px"><b>DEBIT</b></span>
<span class="c" style="left:170px;width:352px"><b>E<u>_</u>D1<u>_</u>DorMonD:P24100001001</b></span>
<span class="c" style="left:523px;width:200px"><b style="transform:scaleX(.89)">Montant Cadre Dormant Droit</b></span>
<span class="c" style="left:805px;width:112px"><b>CU</b></span>
<span class="cb" style="left:934px"><i><svg width="13" height="13"><path d="M1.3 5.3l2.7 2.7 5.5-5.7" stroke="#444" stroke-width="1.3" fill="none"/></svg></i></span>
<span class="cb" style="left:999px"><i></i></span>
<span class="cb" style="left:1076px"><i></i></span>
<span class="c" style="left:1121px;width:40px"><b>P24100001001</b></span>
<span class="cb" style="left:1194px"><i></i></span>
<span class="c n" style="left:1413px;width:72px"><b>0,000</b></span>
<span class="c n" style="left:1486px;width:64px"><b>1,000</b></span>
<span class="c n" style="left:1551px;width:88px"><b>0,000</b></span>
<span class="c n" style="left:1640px;width:56px"><b>1,000</b></span>
<span class="c n" style="left:1697px;width:64px"><b>0,00</b></span>
<span class="c n" style="left:1762px;width:56px"><b>0,00</b></span>
<i class="dl"></i>
</div>
<div class="a s" style="top:454px"></div>
<div class="a r" style="top:454px">
<span class="c" style="left:0px;width:88px"><b>P24100002001</b></span>
<span class="c" style="left:89px;width:80px"><b>DEBIT</b></span>
<span class="c" style="left:170px;width:352px"><b>E<u>_</u>D1<u>_</u>DorMonD:P24100002001</b></span>
<span class="c" style="left:523px;width:200px"><b style="transform:scaleX(.89)">Montant Cadre Dormant Droit</b></span>
<span class="c" style="left:805px;width:112px"><b>CU</b></span>
<span class="cb" style="left:934px"><i><svg width="13" height="13"><path d="M1.3 5.3l2.7 2.7 5.5-5.7" stroke="#444" stroke-width="1.3" fill="none"/></svg></i></span>
<span class="cb" style="left:999px"><i></i></span>
<span class="cb" style="left:1076px"><i></i></span>
<span class="c" style="left:1121px;width:40px"><b>P24100002001</b></span>
<span class="cb" style="left:1194px"><i></i></span>
<span class="c n" style="left:1413px;width:72px"><b>0,000</b></span>
<span class="c n" style="left:1486px;width:64px"><b>1,000</b></span>
<span class="c n" style="left:1551px;width:88px"><b>0,000</b></span>
<span class="c n" style="left:1640px;width:56px"><b>1,000</b></span>
<span class="c n" style="left:1697px;width:64px"><b>0,00</b></span>
<span class="c n" style="left:1762px;width:56px"><b>0,00</b></span>
<i class="dl"></i>
</div>
<div class="a s" style="top:470px"></div>
<div class="a r g" style="top:470px">
<span class="c" style="left:0px;width:88px"><b>P24100001001</b></span>
<span class="c" style="left:89px;width:80px"><b>DEBIT</b></span>
<span class="c" style="left:170px;width:352px"><b>E<u>_</u>D1<u>_</u>DorMonG:P24100001001</b></span>
<span class="c" style="left:523px;width:200px"><b style="transform:scaleX(.89)">Montant Cadre Dormant Gauche</b></span>
<span class="c" style="left:805px;width:112px"><b>CU</b></span>
<span class="cb" style="left:934px"><i><svg width="13" height="13"><path d="M1.3 5.3l2.7 2.7 5.5-5.7" stroke="#444" stroke-width="1.3" fill="none"/></svg></i></span>
<span class="cb" style="left:999px"><i></i></span>
<span class="cb" style="left:1076px"><i></i></span>
<span class="c" style="left:1121px;width:40px"><b>P24100001001</b></span>
<span class="cb" style="left:1194px"><i></i></span>
<span class="c n" style="left:1413px;width:72px"><b>0,000</b></span>
<span class="c n" style="left:1486px;width:64px"><b>1,000</b></span>
<span class="c n" style="left:1551px;width:88px"><b>0,000</b></span>
<span class="c n" style="left:1640px;width:56px"><b>1,000</b></span>
<span class="c n" style="left:1697px;width:64px"><b>0,00</b></span>
<span class="c n" style="left:1762px;width:56px"><b>0,00</b></span>
<i class="dl"></i>
</div>
<div class="a s" style="top:486px"></div>
<div class="a r" style="top:486px">
<span class="c" style="left:0px;width:88px"><b>P24100002001</b></span>
<span class="c" style="left:89px;width:80px"><b>DEBIT</b></span>
<span class="c" style="left:170px;width:352px"><b>E<u>_</u>D1<u>_</u>DorMonG:P24100002001</b></span>
<span class="c" style="left:523px;width:200px"><b style="transform:scaleX(.89)">Montant Cadre Dormant Gauche</b></span>
<span class="c" style="left:805px;width:112px"><b>CU</b></span>
<span class="cb" style="left:934px"><i><svg width="13" height="13"><path d="M1.3 5.3l2.7 2.7 5.5-5.7" stroke="#444" stroke-width="1.3" fill="none"/></svg></i></span>
<span class="cb" style="left:999px"><i></i></span>
<span class="cb" style="left:1076px"><i></i></span>
<span class="c" style="left:1121px;width:40px"><b>P24100002001</b></span>
<span class="cb" style="left:1194px"><i></i></span>
<span class="c n" style="left:1413px;width:72px"><b>0,000</b></span>
<span class="c n" style="left:1486px;width:64px"><b>1,000</b></span>
<span class="c n" style="left:1551px;width:88px"><b>0,000</b></span>
<span class="c n" style="left:1640px;width:56px"><b>1,000</b></span>
<span class="c n" style="left:1697px;width:64px"><b>0,00</b></span>
<span class="c n" style="left:1762px;width:56px"><b>0,00</b></span>
<i class="dl"></i>
</div>
<div class="a s" style="top:502px"></div>
<div class="a r g" style="top:502px">
<span class="c" style="left:0px;width:88px"><b>P24100001001</b></span>
<span class="c" style="left:89px;width:80px"><b>DEBIT</b></span>
<span class="c" style="left:170px;width:352px"><b>E<u>_</u>D1<u>_</u>TravDorB:P2410000100</b></span>
<span class="c" style="left:523px;width:200px"><b style="transform:scaleX(.89)">Traverse Dormante Basse</b></span>
<span class="c" style="left:805px;width:112px"><b>CU</b></span>
<span class="cb" style="left:934px"><i><svg width="13" height="13"><path d="M1.3 5.3l2.7 2.7 5.5-5.7" stroke="#444" stroke-width="1.3" fill="none"/></svg></i></span>
<span class="cb" style="left:999px"><i></i></span>
<span class="cb" style="left:1076px"><i></i></span>
<span class="c" style="left:1121px;width:40px"><b>P24100001001</b></span>
<span class="cb" style="left:1194px"><i></i></span>
<span class="c n" style="left:1413px;width:72px"><b>0,000</b></span>
<span class="c n" style="left:1486px;width:64px"><b>1,000</b></span>
<span class="c n" style="left:1551px;width:88px"><b>0,000</b></span>
<span class="c n" style="left:1640px;width:56px"><b>1,000</b></span>
<span class="c n" style="left:1697px;width:64px"><b>0,00</b></span>
<span class="c n" style="left:1762px;width:56px"><b>0,00</b></span>
<i class="dl"></i>
</div>
<div class="a s" style="top:518px"></div>
<div class="a r" style="top:518px">
<span class="c" style="left:0px;width:88px"><b>P24100002001</b></span>
<span class="c" style="left:89px;width:80px"><b>DEBIT</b></span>
<span class="c" style="left:170px;width:352px"><b>E<u>_</u>D1<u>_</u>TravDorB:P2410000200</b></span>
<span class="c" style="left:523px;width:200px"><b style="transform:scaleX(.89)">Traverse Dormante Basse</b></span>
<span class="c" style="left:805px;width:112px"><b>CU</b></span>
<span class="cb" style="left:934px"><i><svg width="13" height="13"><path d="M1.3 5.3l2.7 2.7 5.5-5.7" stroke="#444" stroke-width="1.3" fill="none"/></svg></i></span>
<span class="cb" style="left:999px"><i></i></span>
<span class="cb" style="left:1076px"><i></i></span>
<span class="c" style="left:1121px;width:40px"><b>P24100002001</b></span>
<span class="cb" style="left:1194px"><i></i></span>
<span class="c n" style="left:1413px;width:72px"><b>0,000</b></span>
<span class="c n" style="left:1486px;width:64px"><b>1,000</b></span>
<span class="c n" style="left:1551px;width:88px"><b>0,000</b></span>
<span class="c n" style="left:1640px;width:56px"><b>1,000</b></span>
<span class="c n" style="left:1697px;width:64px"><b>0,00</b></span>
<span class="c n" style="left:1762px;width:56px"><b>0,00</b></span>
<i class="dl"></i>
</div>
<div class="a s" style="top:534px"></div>
<div class="a r g" style="top:534px">
<span class="c" style="left:0px;width:88px"><b>P24100001001</b></span>
<span class="c" style="left:89px;width:80px"><b>DEBIT</b></span>
<span class="c" style="left:170px;width:352px"><b>E<u>_</u>D1<u>_</u>TravDorH:P2410000100</b></span>
<span class="c" style="left:523px;width:200px"><b style="transform:scaleX(.89)">Traverse Dormant Haute</b></span>
<span class="c" style="left:805px;width:112px"><b>CU</b></span>
<span class="cb" style="left:934px"><i><svg width="13" height="13"><path d="M1.3 5.3l2.7 2.7 5.5-5.7" stroke="#444" stroke-width="1.3" fill="none"/></svg></i></span>
<span class="cb" style="left:999px"><i></i></span>
<span class="cb" style="left:1076px"><i></i></span>
<span class="c" style="left:1121px;width:40px"><b>P24100001001</b></span>
<span class="cb" style="left:1194px"><i></i></span>
<span class="c n" style="left:1413px;width:72px"><b>0,000</b></span>
<span class="c n" style="left:1486px;width:64px"><b>1,000</b></span>
<span class="c n" style="left:1551px;width:88px"><b>0,000</b></span>
<span class="c n" style="left:1640px;width:56px"><b>1,000</b></span>
<span class="c n" style="left:1697px;width:64px"><b>0,00</b></span>
<span class="c n" style="left:1762px;width:56px"><b>0,00</b></span>
<i class="dl"></i>
</div>
<div class="a s" style="top:550px"></div>
<div class="a r" style="top:550px">
<span class="c" style="left:0px;width:88px"><b>P24100002001</b></span>
<span class="c" style="left:89px;width:80px"><b>DEBIT</b></span>
<span class="c" style="left:170px;width:352px"><b>E<u>_</u>D1<u>_</u>TravDorH:P2410000200</b></span>
<span class="c" style="left:523px;width:200px"><b style="transform:scaleX(.89)">Traverse Dormant Haute</b></span>
<span class="c" style="left:805px;width:112px"><b>CU</b></span>
<span class="cb" style="left:934px"><i><svg width="13" height="13"><path d="M1.3 5.3l2.7 2.7 5.5-5.7" stroke="#444" stroke-width="1.3" fill="none"/></svg></i></span>
<span class="cb" style="left:999px"><i></i></span>
<span class="cb" style="left:1076px"><i></i></span>
<span class="c" style="left:1121px;width:40px"><b>P24100002001</b></span>
<span class="cb" style="left:1194px"><i></i></span>
<span class="c n" style="left:1413px;width:72px"><b>0,000</b></span>
<span class="c n" style="left:1486px;width:64px"><b>1,000</b></span>
<span class="c n" style="left:1551px;width:88px"><b>0,000</b></span>
<span class="c n" style="left:1640px;width:56px"><b>1,000</b></span>
<span class="c n" style="left:1697px;width:64px"><b>0,00</b></span>
<span class="c n" style="left:1762px;width:56px"><b>0,00</b></span>
<i class="dl"></i>
</div>
<div class="a s" style="top:566px"></div>
<div class="a r g" style="top:566px">
<span class="c" style="left:0px;width:88px"><b>P24120001008</b></span>
<span class="c" style="left:89px;width:80px"><b>DEBIT</b></span>
<span class="c" style="left:170px;width:352px"><b>E<u>_</u>D1<u>_</u>DorMonD:P24120001008</b></span>
<span class="c" style="left:523px;width:200px"><b style="transform:scaleX(.89)">Montant Cadre Dormant Droit</b></span>
<span class="c" style="left:805px;width:112px"><b>CU</b></span>
<span class="cb" style="left:934px"><i><svg width="13" height="13"><path d="M1.3 5.3l2.7 2.7 5.5-5.7" stroke="#444" stroke-width="1.3" fill="none"/></svg></i></span>
<span class="cb" style="left:999px"><i></i></span>
<span class="cb" style="left:1076px"><i></i></span>
<span class="c" style="left:1121px;width:40px"><b>P24120001008</b></span>
<span class="cb" style="left:1194px"><i></i></span>
<span class="c n" style="left:1413px;width:72px"><b>0,000</b></span>
<span class="c n" style="left:1486px;width:64px"><b>1,000</b></span>
<span class="c n" style="left:1551px;width:88px"><b>0,000</b></span>
<span class="c n" style="left:1640px;width:56px"><b>1,000</b></span>
<span class="c n" style="left:1697px;width:64px"><b>0,00</b></span>
<span class="c n" style="left:1762px;width:56px"><b>0,00</b></span>
<i class="dl"></i>
</div>
<div class="a s" style="top:582px"></div>
<div class="a r" style="top:582px">
<span class="c" style="left:0px;width:88px"><b>P24120001009</b></span>
<span class="c" style="left:89px;width:80px"><b>DEBIT</b></span>
<span class="c" style="left:170px;width:352px"><b>E<u>_</u>D1<u>_</u>DorMonD:P24120001009</b></span>
<span class="c" style="left:523px;width:200px"><b style="transform:scaleX(.89)">Montant Cadre Dormant Droit</b></span>
<span class="c" style="left:805px;width:112px"><b>CU</b></span>
<span class="cb" style="left:934px"><i><svg width="13" height="13"><path d="M1.3 5.3l2.7 2.7 5.5-5.7" stroke="#444" stroke-width="1.3" fill="none"/></svg></i></span>
<span class="cb" style="left:999px"><i></i></span>
<span class="cb" style="left:1076px"><i></i></span>
<span class="c" style="left:1121px;width:40px"><b>P24120001009</b></span>
<span class="cb" style="left:1194px"><i></i></span>
<span class="c n" style="left:1413px;width:72px"><b>0,000</b></span>
<span class="c n" style="left:1486px;width:64px"><b>1,000</b></span>
<span class="c n" style="left:1551px;width:88px"><b>0,000</b></span>
<span class="c n" style="left:1640px;width:56px"><b>1,000</b></span>
<span class="c n" style="left:1697px;width:64px"><b>0,00</b></span>
<span class="c n" style="left:1762px;width:56px"><b>0,00</b></span>
<i class="dl"></i>
</div>
<div class="a s" style="top:598px"></div>
<div class="a r g" style="top:598px">
<span class="c" style="left:0px;width:88px"><b>P24120001008</b></span>
<span class="c" style="left:89px;width:80px"><b>DEBIT</b></span>
<span class="c" style="left:170px;width:352px"><b>E<u>_</u>D1<u>_</u>DorMonG:P24120001008</b></span>
<span class="c" style="left:523px;width:200px"><b style="transform:scaleX(.89)">Montant Cadre Dormant Gauche</b></span>
<span class="c" style="left:805px;width:112px"><b>CU</b></span>
<span class="cb" style="left:934px"><i><svg width="13" height="13"><path d="M1.3 5.3l2.7 2.7 5.5-5.7" stroke="#444" stroke-width="1.3" fill="none"/></svg></i></span>
<span class="cb" style="left:999px"><i></i></span>
<span class="cb" style="left:1076px"><i></i></span>
<span class="c" style="left:1121px;width:40px"><b>P24120001008</b></span>
<span class="cb" style="left:1194px"><i></i></span>
<span class="c n" style="left:1413px;width:72px"><b>0,000</b></span>
<span class="c n" style="left:1486px;width:64px"><b>1,000</b></span>
<span class="c n" style="left:1551px;width:88px"><b>0,000</b></span>
<span class="c n" style="left:1640px;width:56px"><b>1,000</b></span>
<span class="c n" style="left:1697px;width:64px"><b>0,00</b></span>
<span class="c n" style="left:1762px;width:56px"><b>0,00</b></span>
<i class="dl"></i>
</div>
<div class="a s" style="top:614px"></div>
<div class="a r" style="top:614px">
<span class="c" style="left:0px;width:88px"><b>P24120001009</b></span>
<span class="c" style="left:89px;width:80px"><b>DEBIT</b></span>
<span class="c" style="left:170px;width:352px"><b>E<u>_</u>D1<u>_</u>DorMonG:P24120001009</b></span>
<span class="c" style="left:523px;width:200px"><b style="transform:scaleX(.89)">Montant Cadre Dormant Gauche</b></span>
<span class="c" style="left:805px;width:112px"><b>CU</b></span>
<span class="cb" style="left:934px"><i><svg width="13" height="13"><path d="M1.3 5.3l2.7 2.7 5.5-5.7" stroke="#444" stroke-width="1.3" fill="none"/></svg></i></span>
<span class="cb" style="left:999px"><i></i></span>
<span class="cb" style="left:1076px"><i></i></span>
<span class="c" style="left:1121px;width:40px"><b>P24120001009</b></span>
<span class="cb" style="left:1194px"><i></i></span>
<span class="c n" style="left:1413px;width:72px"><b>0,000</b></span>
<span class="c n" style="left:1486px;width:64px"><b>1,000</b></span>
<span class="c n" style="left:1551px;width:88px"><b>0,000</b></span>
<span class="c n" style="left:1640px;width:56px"><b>1,000</b></span>
<span class="c n" style="left:1697px;width:64px"><b>0,00</b></span>
<span class="c n" style="left:1762px;width:56px"><b>0,00</b></span>
<i class="dl"></i>
</div>
<div class="a s" style="top:630px"></div>
<div class="a r g" style="top:630px">
<span class="c" style="left:0px;width:88px"><b>P24120001008</b></span>
<span class="c" style="left:89px;width:80px"><b>DEBIT</b></span>
<span class="c" style="left:170px;width:352px"><b>E<u>_</u>D1<u>_</u>TravDorB:P2412000100</b></span>
<span class="c" style="left:523px;width:200px"><b style="transform:scaleX(.89)">Traverse Dormante Basse</b></span>
<span class="c" style="left:805px;width:112px"><b>CU</b></span>
<span class="cb" style="left:934px"><i><svg width="13" height="13"><path d="M1.3 5.3l2.7 2.7 5.5-5.7" stroke="#444" stroke-width="1.3" fill="none"/></svg></i></span>
<span class="cb" style="left:999px"><i></i></span>
<span class="cb" style="left:1076px"><i></i></span>
<span class="c" style="left:1121px;width:40px"><b>P24120001008</b></span>
<span class="cb" style="left:1194px"><i></i></span>
<span class="c n" style="left:1413px;width:72px"><b>0,000</b></span>
<span class="c n" style="left:1486px;width:64px"><b>1,000</b></span>
<span class="c n" style="left:1551px;width:88px"><b>0,000</b></span>
<span class="c n" style="left:1640px;width:56px"><b>1,000</b></span>
<span class="c n" style="left:1697px;width:64px"><b>0,00</b></span>
<span class="c n" style="left:1762px;width:56px"><b>0,00</b></span>
<i class="dl"></i>
</div>
<div class="a s" style="top:646px"></div>
<div class="a r" style="top:646px">
<span class="c" style="left:0px;width:88px"><b>P24120001009</b></span>
<span class="c" style="left:89px;width:80px"><b>DEBIT</b></span>
<span class="c" style="left:170px;width:352px"><b>E<u>_</u>D1<u>_</u>TravDorB:P2412000100</b></span>
<span class="c" style="left:523px;width:200px"><b style="transform:scaleX(.89)">Traverse Dormante Basse</b></span>
<span class="c" style="left:805px;width:112px"><b>CU</b></span>
<span class="cb" style="left:934px"><i><svg width="13" height="13"><path d="M1.3 5.3l2.7 2.7 5.5-5.7" stroke="#444" stroke-width="1.3" fill="none"/></svg></i></span>
<span class="cb" style="left:999px"><i></i></span>
<span class="cb" style="left:1076px"><i></i></span>
<span class="c" style="left:1121px;width:40px"><b>P24120001009</b></span>
<span class="cb" style="left:1194px"><i></i></span>
<span class="c n" style="left:1413px;width:72px"><b>0,000</b></span>
<span class="c n" style="left:1486px;width:64px"><b>1,000</b></span>
<span class="c n" style="left:1551px;width:88px"><b>0,000</b></span>
<span class="c n" style="left:1640px;width:56px"><b>1,000</b></span>
<span class="c n" style="left:1697px;width:64px"><b>0,00</b></span>
<span class="c n" style="left:1762px;width:56px"><b>0,00</b></span>
<i class="dl"></i>
</div>
<div class="a s" style="top:662px"></div>
<div class="a r g" style="top:662px">
<span class="c" style="left:0px;width:88px"><b>P24120001008</b></span>
<span class="c" style="left:89px;width:80px"><b>DEBIT</b></span>
<span class="c" style="left:170px;width:352px"><b>E<u>_</u>D1<u>_</u>TravDorH:P2412000100</b></span>
<span class="c" style="left:523px;width:200px"><b style="transform:scaleX(.89)">Traverse Dormant Haute</b></span>
<span class="c" style="left:805px;width:112px"><b>CU</b></span>
<span class="cb" style="left:934px"><i><svg width="13" height="13"><path d="M1.3 5.3l2.7 2.7 5.5-5.7" stroke="#444" stroke-width="1.3" fill="none"/></svg></i></span>
<span class="cb" style="left:999px"><i></i></span>
<span class="cb" style="left:1076px"><i></i></span>
<span class="c" style="left:1121px;width:40px"><b>P24120001008</b></span>
<span class="cb" style="left:1194px"><i></i></span>
<span class="c n" style="left:1413px;width:72px"><b>0,000</b></span>
<span class="c n" style="left:1486px;width:64px"><b>1,000</b></span>
<span class="c n" style="left:1551px;width:88px"><b>0,000</b></span>
<span class="c n" style="left:1640px;width:56px"><b>1,000</b></span>
<span class="c n" style="left:1697px;width:64px"><b>0,00</b></span>
<span class="c n" style="left:1762px;width:56px"><b>0,00</b></span>
<i class="dl"></i>
</div>
<div class="a s" style="top:678px"></div>
<div class="a r" style="top:678px">
<span class="c" style="left:0px;width:88px"><b>P24120001009</b></span>
<span class="c" style="left:89px;width:80px"><b>DEBIT</b></span>
<span class="c" style="left:170px;width:352px"><b>E<u>_</u>D1<u>_</u>TravDorH:P2412000100</b></span>
<span class="c" style="left:523px;width:200px"><b style="transform:scaleX(.89)">Traverse Dormant Haute</b></span>
<span class="c" style="left:805px;width:112px"><b>CU</b></span>
<span class="cb" style="left:934px"><i><svg width="13" height="13"><path d="M1.3 5.3l2.7 2.7 5.5-5.7" stroke="#444" stroke-width="1.3" fill="none"/></svg></i></span>
<span class="cb" style="left:999px"><i></i></span>
<span class="cb" style="left:1076px"><i></i></span>
<span class="c" style="left:1121px;width:40px"><b>P24120001009</b></span>
<span class="cb" style="left:1194px"><i></i></span>
<span class="c n" style="left:1413px;width:72px"><b>0,000</b></span>
<span class="c n" style="left:1486px;width:64px"><b>1,000</b></span>
<span class="c n" style="left:1551px;width:88px"><b>0,000</b></span>
<span class="c n" style="left:1640px;width:56px"><b>1,000</b></span>
<span class="c n" style="left:1697px;width:64px"><b>0,00</b></span>
<span class="c n" style="left:1762px;width:56px"><b>0,00</b></span>
<i class="dl"></i>
</div>
<div class="a s" style="top:694px"></div>
<div class="a r g" style="top:694px">
<span class="c" style="left:0px;width:88px"><b>P24120001010</b></span>
<span class="c" style="left:89px;width:80px"><b>DEBIT</b></span>
<span class="c" style="left:170px;width:352px"><b>E<u>_</u>D1<u>_</u>TravDorH:P2412000101</b></span>
<span class="c" style="left:523px;width:200px"><b style="transform:scaleX(.89)">Traverse Dormant Haute</b></span>
<span class="c" style="left:805px;width:112px"><b>CU</b></span>
<span class="cb" style="left:934px"><i><svg width="13" height="13"><path d="M1.3 5.3l2.7 2.7 5.5-5.7" stroke="#444" stroke-width="1.3" fill="none"/></svg></i></span>
<span class="cb" style="left:999px"><i></i></span>
<span class="cb" style="left:1076px"><i></i></span>
<span class="c" style="left:1121px;width:40px"><b>P24120001010</b></span>
<span class="cb" style="left:1194px"><i></i></span>
<span class="c n" style="left:1413px;width:72px"><b>0,000</b></span>
<span class="c n" style="left:1486px;width:64px"><b>1,000</b></span>
<span class="c n" style="left:1551px;width:88px"><b>0,000</b></span>
<span class="c n" style="left:1640px;width:56px"><b>1,000</b></span>
<span class="c n" style="left:1697px;width:64px"><b>0,00</b></span>
<span class="c n" style="left:1762px;width:56px"><b>0,00</b></span>
<i class="dl"></i>
</div>
<div class="a s" style="top:710px"></div>
<div class="a r" style="top:710px">
<span class="c" style="left:0px;width:88px"><b>P24120001010</b></span>
<span class="c" style="left:89px;width:80px"><b>DEBIT</b></span>
<span class="c" style="left:170px;width:352px"><b>E<u>_</u>D1<u>_</u>DorMonG:P24120001010</b></span>
<span class="c" style="left:523px;width:200px"><b style="transform:scaleX(.89)">Montant Cadre Dormant Gauche</b></span>
<span class="c" style="left:805px;width:112px"><b>CU</b></span>
<span class="cb" style="left:934px"><i><svg width="13" height="13"><path d="M1.3 5.3l2.7 2.7 5.5-5.7" stroke="#444" stroke-width="1.3" fill="none"/></svg></i></span>
<span class="cb" style="left:999px"><i></i></span>
<span class="cb" style="left:1076px"><i></i></span>
<span class="c" style="left:1121px;width:40px"><b>P24120001010</b></span>
<span class="cb" style="left:1194px"><i><svg width="13" height="13"><path d="M1.3 5.3l2.7 2.7 5.5-5.7" stroke="#444" stroke-width="1.3" fill="none"/></svg></i></span>
<span class="c" style="left:1243px;width:88px"><b>RL20022024</b></span>
<span class="c" style="left:1332px;width:80px"><b>1</b></span>
<span class="c n" style="left:1413px;width:72px"><b>1,000</b></span>
<span class="c n" style="left:1486px;width:64px"><b>1,000</b></span>
<span class="c n" style="left:1551px;width:88px"><b>0,000</b></span>
<span class="c n" style="left:1640px;width:56px"><b>1,000</b></span>
<span class="c n" style="left:1697px;width:64px"><b>0,00</b></span>
<span class="c n" style="left:1762px;width:56px"><b>0,00</b></span>
<i class="dl"></i>
</div>
<div class="a s" style="top:726px"></div>
<div class="a r g" style="top:726px">
<span class="c" style="left:0px;width:88px"><b>P24120001010</b></span>
<span class="c" style="left:89px;width:80px"><b>DEBIT</b></span>
<span class="c" style="left:170px;width:352px"><b>E<u>_</u>D1<u>_</u>TravDorB:P2412000101</b></span>
<span class="c" style="left:523px;width:200px"><b style="transform:scaleX(.89)">Traverse Dormante Basse</b></span>
<span class="c" style="left:805px;width:112px"><b>CU</b></span>
<span class="cb" style="left:934px"><i><svg width="13" height="13"><path d="M1.3 5.3l2.7 2.7 5.5-5.7" stroke="#444" stroke-width="1.3" fill="none"/></svg></i></span>
<span class="cb" style="left:999px"><i></i></span>
<span class="cb" style="left:1076px"><i></i></span>
<span class="c" style="left:1121px;width:40px"><b>P24120001010</b></span>
<span class="cb" style="left:1194px"><i><svg width="13" height="13"><path d="M1.3 5.3l2.7 2.7 5.5-5.7" stroke="#444" stroke-width="1.3" fill="none"/></svg></i></span>
<span class="c" style="left:1243px;width:88px"><b>RL20022024</b></span>
<span class="c" style="left:1332px;width:80px"><b>2</b></span>
<span class="c n" style="left:1413px;width:72px"><b>1,000</b></span>
<span class="c n" style="left:1486px;width:64px"><b>1,000</b></span>
<span class="c n" style="left:1551px;width:88px"><b>0,000</b></span>
<span class="c n" style="left:1640px;width:56px"><b>1,000</b></span>
<span class="c n" style="left:1697px;width:64px"><b>0,00</b></span>
<span class="c n" style="left:1762px;width:56px"><b>0,00</b></span>
</div>
<i class="vl" style="left:123px"></i>
<i class="vl" style="left:204px"></i>
<i class="vl" style="left:557px"></i>
<i class="vl" style="left:758px"></i>
<i class="vl" style="left:839px"></i>
<i class="vl" style="left:952px"></i>
<i class="vl" style="left:1001px"></i>
<i class="vl" style="left:1082px"></i>
<i class="vl" style="left:1155px"></i>
<i class="vl" style="left:1196px"></i>
<i class="vl" style="left:1277px"></i>
<i class="vl" style="left:1366px"></i>
<i class="vl" style="left:1447px"></i>
<i class="vl" style="left:1520px"></i>
<i class="vl" style="left:1585px"></i>
<i class="vl" style="left:1674px"></i>
<i class="vl" style="left:1731px"></i>
<i class="vl" style="left:1796px"></i>
<i class="vl" style="left:1853px"></i>
<div class="a" style="left:35px;top:741px;width:1839px;height:1px;background:#a0a0a0"></div>
<div class="a" style="left:2px;top:741px;width:33px;height:1px;background:#9fb6d3"></div>
<div class="a" style="left:556px;top:356px;width:203px;height:19px;border:3px solid #000"></div>
<div class="a" style="left:558px;top:357px;width:199px;height:1px;background:repeating-linear-gradient(to right,#b0b0b0 0 1px,transparent 1px 2px)"></div>
<div class="a" style="left:557px;top:358px;width:1px;height:15px;background:repeating-linear-gradient(to bottom,#b0b0b0 0 1px,transparent 1px 2px)"></div>
<div class="a" style="left:558px;top:373px;width:199px;height:1px;background:repeating-linear-gradient(to right,#b0b0b0 0 1px,transparent 1px 2px)"></div>
<div class="a mn" style="left:733px;top:335px;width:308px;height:520px;box-shadow:2px 2px 3px rgba(0,0,0,0.42)">
<div class="mi" style="left:2px;top:2px;width:302px;padding-left:31px">Actualiser</div>
<i class="ms" style="left:30px;top:27px;width:274px"></i>
<div class="mi" style="left:2px;top:31px;width:302px;padding-left:31px">Déclaration Manuelle (F1)</div>
<div class="mi dis" style="left:2px;top:53px;width:302px;padding-left:31px">Déclaration Manuelle Complète (Maj+F1)</div>
<div class="mi" style="left:2px;top:75px;width:302px;padding-left:31px">Déclaration Auto. Qté. Cond.</div>
<div class="mi" style="left:2px;top:97px;width:302px;padding-left:31px">Déclaration Surplus</div>
<div class="mi" style="left:2px;top:119px;width:302px;padding-left:31px">Déclaration Rebut</div>
<div class="mi" style="left:2px;top:141px;width:302px;padding-left:31px">Déclaration Retour</div>
<div class="mi" style="left:2px;top:163px;width:302px;padding-left:31px">Solde Etape</div>
<i class="ms" style="left:30px;top:188px;width:274px"></i>
<div class="mi mh" style="left:2px;top:192px;width:302px;padding-left:31px">Affectation RL</div>
<svg class="a" style="left:291px;top:199px" width="5" height="8"><path d="M0.5 0.5l3 3-3 3" stroke="#333" stroke-width="1.1" fill="none"/></svg>
<div class="mi" style="left:2px;top:214px;width:302px;padding-left:31px">Affectation Sous-Traitance</div>
<svg class="a" style="left:291px;top:221px" width="5" height="8"><path d="M0.5 0.5l3 3-3 3" stroke="#333" stroke-width="1.1" fill="none"/></svg>
<div class="mi" style="left:2px;top:236px;width:302px;padding-left:31px">Affectation Substitution</div>
<svg class="a" style="left:291px;top:243px" width="5" height="8"><path d="M0.5 0.5l3 3-3 3" stroke="#333" stroke-width="1.1" fill="none"/></svg>
<i class="ms" style="left:30px;top:261px;width:274px"></i>
<div class="mi" style="left:2px;top:265px;width:302px;padding-left:31px">Ordonnancement (F11)</div>
<div class="mi" style="left:2px;top:287px;width:302px;padding-left:31px">Reset Ordonnancement (Maj+F11)</div>
<i class="ms" style="left:30px;top:312px;width:274px"></i>
<div class="mi" style="left:2px;top:316px;width:302px;padding-left:31px">Informations Suivies (F3)</div>
<i class="ms" style="left:30px;top:341px;width:274px"></i>
<div class="mi" style="left:2px;top:345px;width:302px;padding-left:31px">Déclaration Co-Produits</div>
<i class="ms" style="left:30px;top:370px;width:274px"></i>
<div class="mi" style="left:2px;top:374px;width:302px;padding-left:31px">Consultation Charge Ressource</div>
<svg class="a" style="left:291px;top:381px" width="5" height="8"><path d="M0.5 0.5l3 3-3 3" stroke="#333" stroke-width="1.1" fill="none"/></svg>
<div class="mi" style="left:2px;top:396px;width:302px;padding-left:31px">Consultation Charge Famille</div>
<svg class="a" style="left:291px;top:403px" width="5" height="8"><path d="M0.5 0.5l3 3-3 3" stroke="#333" stroke-width="1.1" fill="none"/></svg>
<i class="ms" style="left:30px;top:421px;width:274px"></i>
<div class="mi" style="left:2px;top:425px;width:302px;padding-left:31px">Détail Car. Technique (F8)</div>
<div class="mi" style="left:2px;top:447px;width:302px;padding-left:31px">His. Déc. FAT/ CT (Maj+F10)</div>
<div class="mi" style="left:2px;top:469px;width:302px;padding-left:31px">His. Déclarations / OF (F10)</div>
<div class="mi" style="left:2px;top:491px;width:302px;padding-left:31px">His. Déclarations Ressource</div>
</div>
<div class="a mn" style="left:1035px;top:525px;width:262px;height:153px;box-shadow:2px 2px 3px rgba(0,0,0,0.42)">
<div class="mi" style="left:2px;top:2px;width:255px;padding-left:31px">Création RL / Sélection (Maj+F9)</div>
<div class="mi" style="left:2px;top:24px;width:255px;padding-left:31px">Choix RL / Sélection (Maj+F2)</div>
<div class="mi mh" style="left:2px;top:46px;width:255px;padding-left:31px">Détachement RL (Maj+F6)</div>
<i class="ms" style="left:30px;top:71px;width:227px"></i>
<div class="mi" style="left:2px;top:75px;width:255px;padding-left:31px">Affectation RL Partiel / Net</div>
<div class="mi" style="left:2px;top:97px;width:255px;padding-left:31px">Affectation RL Partiel / Manuelle</div>
<i class="ms" style="left:30px;top:122px;width:227px"></i>
<div class="mi" style="left:2px;top:126px;width:255px;padding-left:31px">Désaffectation RL Partiel</div>
</div>
<svg class="a" style="left:1165px;top:587px" width="14" height="21" viewBox="0 0 14 21"><path d="M1.5 1.5V17.5L5.5 13.5L8.5 19.5L10.5 18.5L7.5 12.5H12.5Z" fill="#fff" stroke="#000" stroke-width="1" stroke-linejoin="miter"/></svg>
</body></html>
